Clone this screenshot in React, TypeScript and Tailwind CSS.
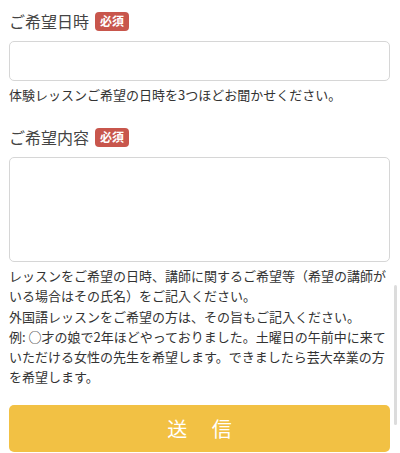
import type { ReactNode } from "react";

function Required() {
  return (
    <span className="ml-1.5 inline-flex h-[19px] items-center rounded-[4px] bg-[#c8564c] px-[5px] text-[12px] font-bold leading-none text-white">
      必須
    </span>
  );
}

function Field({ label, children, help }: { label: string; children: ReactNode; help: ReactNode }) {
  return (
    <div>
      <div className="flex items-center">
        <span className="text-[16px] leading-[20px] text-[#444]">{label}</span>
        <Required />
      </div>
      <div className="mt-[10px]">{children}</div>
      <div className="mt-[4px] text-[13px] leading-[20.2px] text-[#333]">{help}</div>
    </div>
  );
}

export default function App() {
  return (
    <div
      className="relative h-[453px] w-[400px] overflow-hidden bg-white px-[9px] pt-[11px]"
      style={{ fontFamily: '"Noto Sans CJK JP", "Noto Sans", sans-serif' }}
    >
      <Field
        label="ご希望日時"
        help="体験レッスンご希望の日時を3つほどお聞かせください。"
      >
        <input className="block h-[40px] w-[381px] rounded-[5px] border border-[#d6d6d6] bg-white" />
      </Field>

      <div className="mt-[22px]">
        <Field
          label="ご希望内容"
          help={
            <>
              <p>レッスンをご希望の日時、講師に関するご希望等（希望の講師がいる場合はその氏名）をご記入ください。</p>
              <p>外国語レッスンをご希望の方は、その旨もご記入ください。</p>
              <p>例: ○才の娘で2年ほどやっておりました。土曜日の午前中に来ていただける女性の先生を希望します。できましたら芸大卒業の方を希望します。</p>
            </>
          }
        >
          <textarea className="block h-[105px] w-[381px] resize-none rounded-[5px] border border-[#d6d6d6] bg-white" />
        </Field>
      </div>

      <button className="mt-[18px] flex h-[47px] w-[381px] items-center justify-center rounded-[5px] bg-[#f2c144] text-[20px] tracking-[0.5em] text-white">
        <span className="pl-[0.5em]">送&nbsp;信</span>
      </button>

      <div className="absolute right-[3px] top-[285px] h-[140px] w-[3px] rounded-full bg-[#dcdcdc]" />
    </div>
  );
}
